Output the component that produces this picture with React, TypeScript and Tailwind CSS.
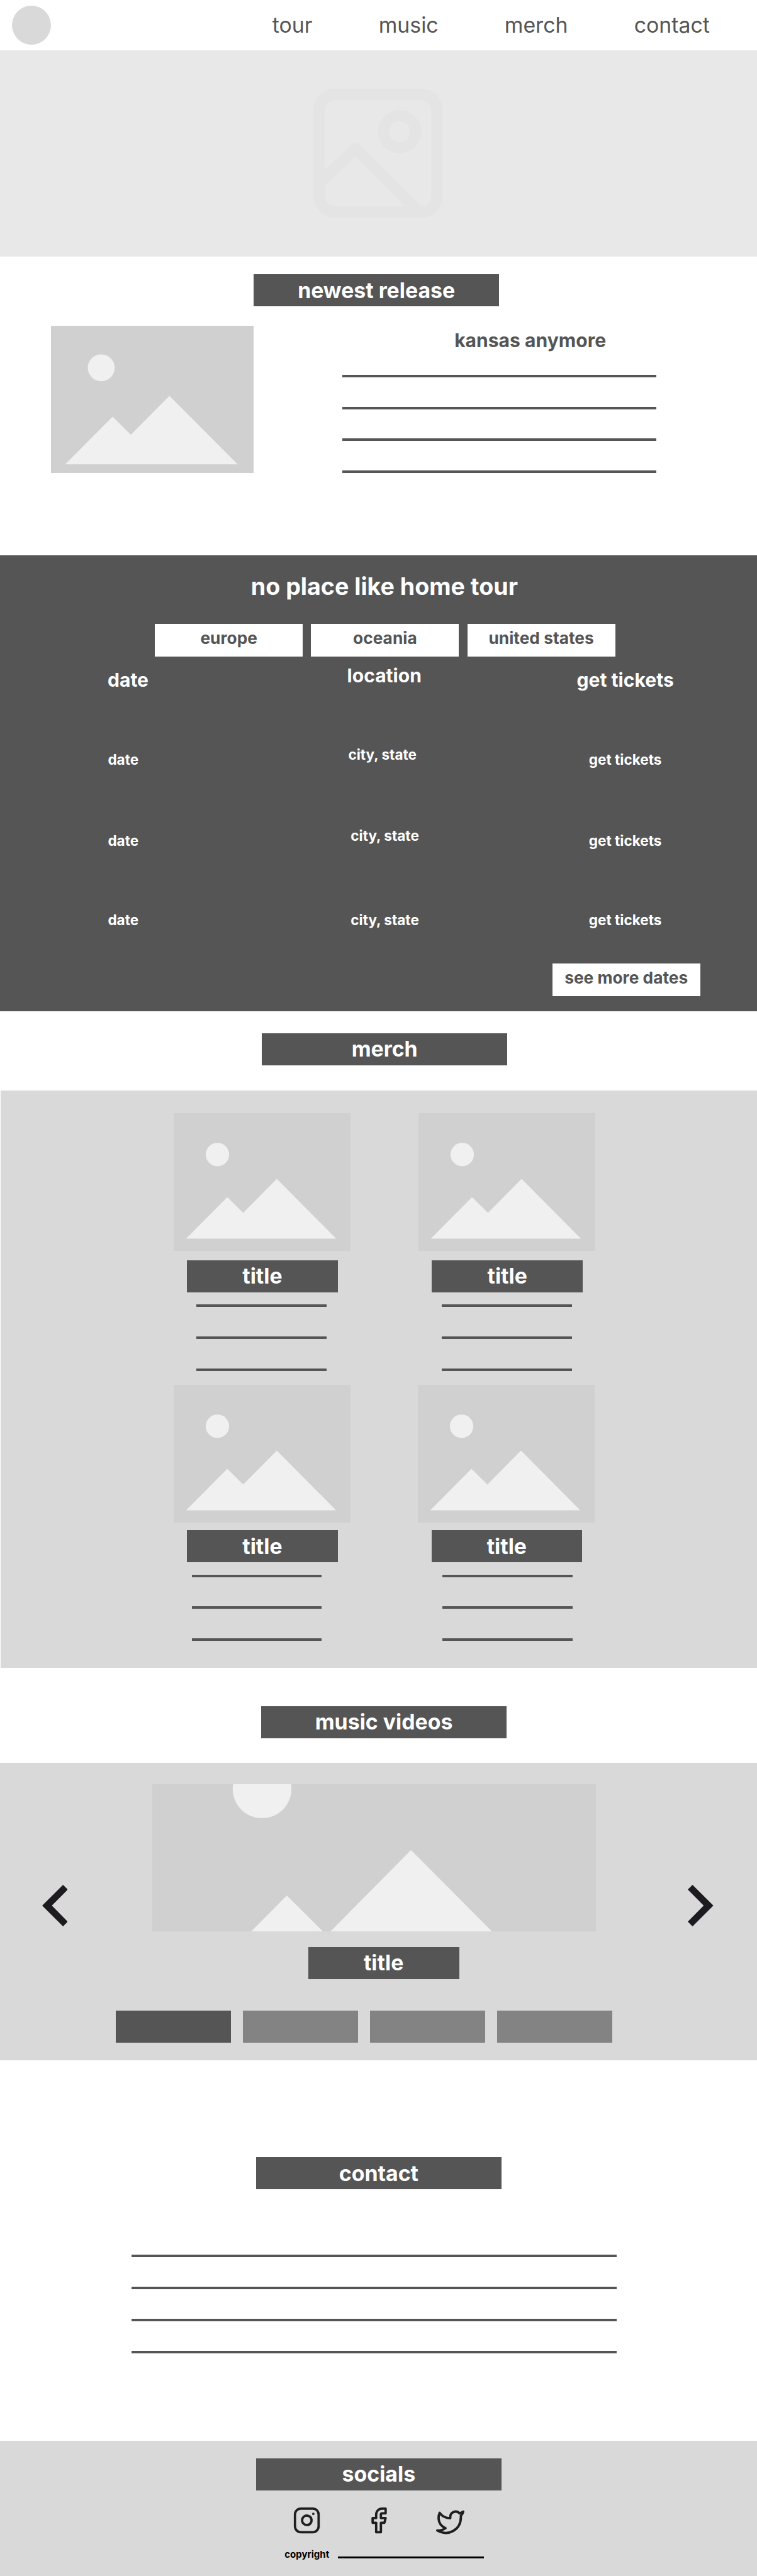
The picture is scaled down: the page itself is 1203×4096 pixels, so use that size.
import React from "react";

function Bar({ children, className = "" }: { children?: React.ReactNode; className?: string }) {
  return (
    <h2
      className={`flex h-[51px] items-center justify-center bg-[#555555] text-[33.84px] leading-none font-bold text-white ${className}`}
    >
      {children}
    </h2>
  );
}

function Lines({ count, className = "" }: { count: number; className?: string }) {
  return (
    <div className={`flex flex-col gap-[46.75px] ${className}`}>
      {Array.from({ length: count }, (_, i) => (
        <div key={i} className="h-1 bg-[#555555]" />
      ))}
    </div>
  );
}

function Placeholder({ className = "" }: { className?: string }) {
  return (
    <svg viewBox="0 0 299 233" preserveAspectRatio="xMidYMid slice" className={`shrink-0 bg-[#d0d0d0] ${className}`}>
      <circle cx="74" cy="70" r="19.8" fill="#f0f0f0" />
      <path d="M21 212.2 90.7 142l26.9 26.7 56.8-57.4L274.7 212.2Z" fill="#f0f0f0" />
    </svg>
  );
}

function Card({ imageGap, lines }: { imageGap: string; lines: string }) {
  return (
    <article className="w-[281px]">
      <Placeholder className="h-[219px] w-[281px]" />
      <Bar className={`ml-[21.1px] w-[239.5px] ${imageGap}`}>title</Bar>
      <Lines count={3} className={`mt-[19.5px] w-[206.7px] ${lines}`} />
    </article>
  );
}

function TourRow({ city = "" }: { city?: string }) {
  return (
    <div className="flex h-7 text-[22.56px] leading-7">
      <span className="w-[382.6px]">date</span>
      <span className={`w-[339.7px] ${city}`}>city, state</span>
      <span className="w-[200px] text-center">get tickets</span>
    </div>
  );
}

function Region({ children }: { children: React.ReactNode }) {
  return (
    <button className="flex h-[51.7px] w-[235px] justify-center bg-white pt-[6.4px] text-[26.3px] leading-8 font-bold whitespace-nowrap text-[#555555]">
      {children}
    </button>
  );
}

export default function App() {
  return (
    <div className="h-[4096px] w-[1203px] overflow-hidden bg-white font-['Inter',sans-serif]">
      <header className="flex h-20 items-start">
        <div className="mt-[8.5px] ml-[18.8px] size-[62px] rounded-full bg-[#d9d9d9]" />
        <nav className="mt-5 ml-[352px] flex gap-[105.1px] text-[33.84px] leading-10 text-[#555555]">
          <a>tour</a>
          <a>music</a>
          <a>merch</a>
          <a>contact</a>
        </nav>
      </header>

      <section className="flex h-[328px] justify-center bg-[#e8e8e8] pt-[61px] pr-[2px]">
        <svg viewBox="0 0 219 219" fill="none" stroke="#e4e4e4" strokeWidth="19.4" className="size-[205.5px]">
          <rect x="9.7" y="9.7" width="199.6" height="199.6" rx="27" />
          <circle cx="146" cy="73" r="27.3" strokeWidth="18.5" />
          <path d="M11 159 71.5 102 178 208" strokeLinejoin="round" />
        </svg>
      </section>

      <section className="h-[475.4px] pt-[28.1px]">
        <Bar className="ml-[403.4px] w-[389.5px]">newest release</Bar>
        <div className="mt-[30.8px] flex">
          <Placeholder className="ml-[80.6px] h-[234px] w-[322.8px]" />
          <div className="ml-[140.6px] w-[498.7px]">
            <h3 className="mt-[4.8px] pl-[178.2px] text-[30.07px] leading-9 font-bold text-[#555555]">kansas anymore</h3>
            <Lines count={4} className="mt-[37.1px]" />
          </div>
        </div>
      </section>

      <section className="h-[724.7px] bg-[#555555] pt-[27.6px] font-bold text-white">
        <h2 className="ml-[398.8px] text-[37.6px] leading-[44px]">no place like home tour</h2>
        <div className="mt-[37.5px] ml-[246.2px] flex gap-[13.2px]">
          <Region>europe</Region>
          <Region>oceania</Region>
          <Region>united states</Region>
        </div>
        <div className="pl-[170.4px]">
          <div className="mt-[19px] flex h-9 text-[30.07px] leading-9">
            <span className="w-[381.2px] pl-[0.6px]">date</span>
            <span className="-mt-[7.2px] w-[365px]">location</span>
            <span className="w-[200px]">get tickets</span>
          </div>
          <div className="mt-[94.8px] ml-px">
            <TourRow city="-mt-[7.5px] -ml-[0.5px] mr-[0.5px]" />
          </div>
          <div className="mt-[101px] ml-px">
            <TourRow city="-mt-[7.8px] pl-[3.3px]" />
          </div>
          <div className="mt-[97.6px] ml-px">
            <TourRow city="pl-[3.3px]" />
          </div>
        </div>
        <div className="mt-[55.8px] ml-[877.7px]">
          <Region>see more dates</Region>
        </div>
      </section>

      <section className="h-[125.9px] pt-[34.7px]">
        <Bar className="ml-[416.4px] w-[389.5px]">merch</Bar>
      </section>

      <section className="ml-px h-[918px] bg-[#d9d9d9] pt-[35.7px]">
        <div className="ml-[275.1px] flex h-[432.3px] gap-[108.3px]">
          <Card imageGap="mt-[15px]" lines="ml-[36px]" />
          <Card imageGap="mt-[15px]" lines="ml-[36.7px]" />
        </div>
        <div className="ml-[275.1px] flex gap-[107.4px]">
          <Card imageGap="mt-[12.2px]" lines="ml-[28.6px]" />
          <Card imageGap="mt-[12.2px]" lines="ml-[38.5px]" />
        </div>
      </section>

      <section className="h-[151.5px] pt-[60.6px]">
        <Bar className="ml-[415.1px] w-[389.9px]">music videos</Bar>
      </section>

      <section className="h-[472.8px] bg-[#d9d9d9] pt-[34px]">
        <div className="flex items-start">
          <svg viewBox="0 0 43.3 70.4" fill="#1d1b20" className="mt-[159.1px] ml-[66.7px] h-[66.1px] w-[40.7px]">
            <path d="M35.3 0 0 35.2 35.3 70.4l8-8L16.4 35.2 43.3 8Z" />
          </svg>
          <Placeholder className="ml-[135.1px] h-[234px] w-[704.9px]" />
          <svg viewBox="0 0 43.3 70.4" fill="#1d1b20" className="mt-[159.1px] ml-[145.9px] h-[66.1px] w-[40.7px]">
            <path d="M8 0 43.3 35.2 8 70.4l-8-8L26.9 35.2 0 8Z" />
          </svg>
        </div>
        <Bar className="mt-[24.4px] ml-[489.6px] w-[240.1px]">title</Bar>
        <div className="mt-[50.3px] ml-[184.2px] flex gap-[19.6px]">
          <div className="h-[51px] w-[182.5px] bg-[#555555]" />
          <div className="h-[51px] w-[182.5px] bg-[#838383]" />
          <div className="h-[51px] w-[182.5px] bg-[#838383]" />
          <div className="h-[51px] w-[182.5px] bg-[#838383]" />
        </div>
      </section>

      <section className="h-[604.3px] pt-[154.1px]">
        <Bar className="ml-[406.9px] w-[389.9px]">contact</Bar>
        <Lines count={4} className="mt-[104.1px] ml-[208.5px] w-[771.7px]" />
      </section>

      <footer className="h-[216px] bg-[#d9d9d9] pt-[28.2px]">
        <Bar className="ml-[406.9px] w-[389.9px]">socials</Bar>
        <div className="mt-[25.1px] ml-[465.2px] flex gap-[68.6px]">
          <svg viewBox="0 0 24 24" fill="none" stroke="#1e1e1e" strokeWidth="2" strokeLinecap="round" strokeLinejoin="round" className="size-[45.1px]">
            <rect x="2" y="2" width="20" height="20" rx="5" />
            <path d="M16 11.37A4 4 0 1 1 12.63 8 4 4 0 0 1 16 11.37zM17.5 6.5h.01" />
          </svg>
          <svg viewBox="0 0 24 24" fill="none" stroke="#1e1e1e" strokeWidth="2" strokeLinecap="round" strokeLinejoin="round" className="size-[45.1px]">
            <path d="M18 2h-3a5 5 0 0 0-5 5v3H7v4h3v8h4v-8h3l1-4h-4V7a1 1 0 0 1 1-1h3z" />
          </svg>
          <svg viewBox="0 0 24 24" fill="none" stroke="#1e1e1e" strokeWidth="2" strokeLinecap="round" strokeLinejoin="round" className="mt-[3.6px] size-[45.1px] overflow-visible">
            <path d="M23 3a10.9 10.9 0 0 1-3.14 1.53 4.48 4.48 0 0 0-7.86 3v1A10.66 10.66 0 0 1 3 4s-4 9 5 13a11.64 11.64 0 0 1-7 2c9 5 20 0 20-11.5a4.5 4.5 0 0 0-.08-.83A7.72 7.72 0 0 0 23 3z" />
          </svg>
        </div>
        <div className="mt-[18.5px] ml-[452.2px] flex">
          <span className="w-[84.4px] text-[15.04px] leading-5 font-bold text-black">copyright</span>
          <div className="mt-[12.8px] h-[3px] w-[232.1px] bg-black" />
        </div>
      </footer>
    </div>
  );
}
